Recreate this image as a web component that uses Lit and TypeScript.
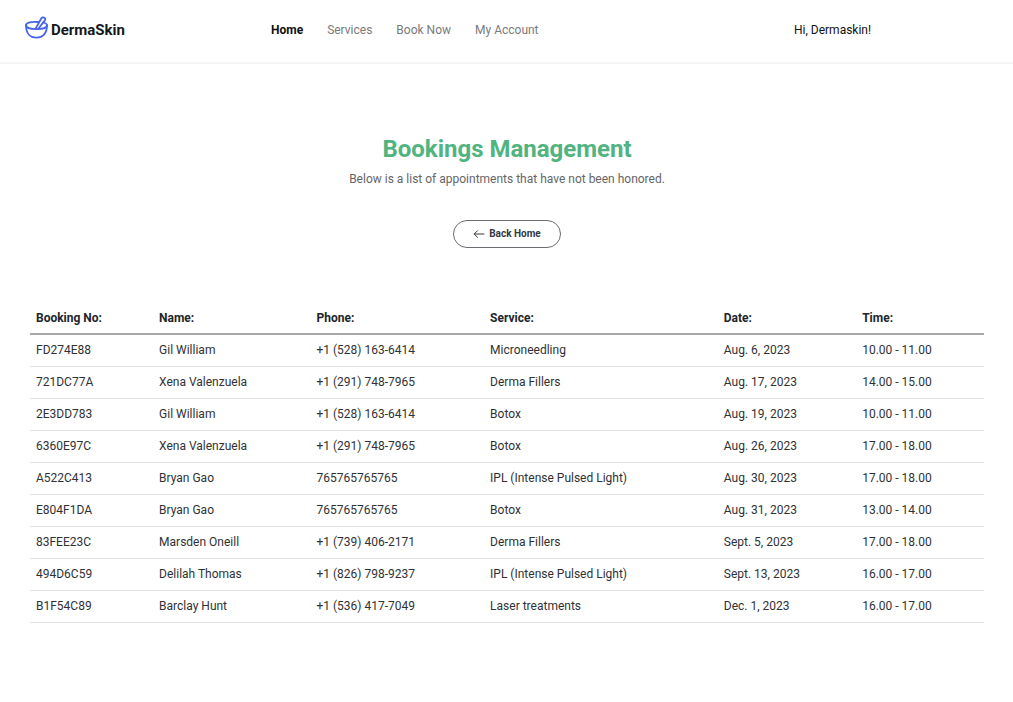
import { LitElement, html, css } from "lit";
import { customElement, property } from "lit/decorators.js";

interface Booking {
  no: string;
  name: string;
  phone: string;
  service: string;
  date: string;
  time: string;
}

const BOOKINGS: Booking[] = [
  { no: "FD274E88", name: "Gil William", phone: "+1 (528) 163-6414", service: "Microneedling", date: "Aug. 6, 2023", time: "10.00 - 11.00" },
  { no: "721DC77A", name: "Xena Valenzuela", phone: "+1 (291) 748-7965", service: "Derma Fillers", date: "Aug. 17, 2023", time: "14.00 - 15.00" },
  { no: "2E3DD783", name: "Gil William", phone: "+1 (528) 163-6414", service: "Botox", date: "Aug. 19, 2023", time: "10.00 - 11.00" },
  { no: "6360E97C", name: "Xena Valenzuela", phone: "+1 (291) 748-7965", service: "Botox", date: "Aug. 26, 2023", time: "17.00 - 18.00" },
  { no: "A522C413", name: "Bryan Gao", phone: "765765765765", service: "IPL (Intense Pulsed Light)", date: "Aug. 30, 2023", time: "17.00 - 18.00" },
  { no: "E804F1DA", name: "Bryan Gao", phone: "765765765765", service: "Botox", date: "Aug. 31, 2023", time: "13.00 - 14.00" },
  { no: "83FEE23C", name: "Marsden Oneill", phone: "+1 (739) 406-2171", service: "Derma Fillers", date: "Sept. 5, 2023", time: "17.00 - 18.00" },
  { no: "494D6C59", name: "Delilah Thomas", phone: "+1 (826) 798-9237", service: "IPL (Intense Pulsed Light)", date: "Sept. 13, 2023", time: "16.00 - 17.00" },
  { no: "B1F54C89", name: "Barclay Hunt", phone: "+1 (536) 417-7049", service: "Laser treatments", date: "Dec. 1, 2023", time: "16.00 - 17.00" },
];

@customElement("site-header")
class SiteHeader extends LitElement {
  static styles = css`
    :host {
      display: block;
      border-bottom: 2px solid #f4f4f4;
    }
    .bar {
      display: grid;
      grid-template-columns: 246fr 523fr 194fr;
      align-items: center;
      height: 62px;
      padding: 0 25px 2px;
      box-sizing: border-box;
    }
    a {
      color: inherit;
      text-decoration: none;
    }
    .brand {
      display: flex;
      align-items: center;
      gap: 3px;
      font-size: 15px;
      line-height: 20px;
      font-weight: 700;
      color: #16181b;
    }
    .logo {
      display: block;
      width: 23px;
      height: 23px;
      margin-bottom: 6px;
    }
    .links {
      display: flex;
      gap: 24px;
      color: #7a7a7a;
    }
    .current {
      font-weight: 700;
      color: #111;
    }
    .greeting {
      color: #111;
    }
  `;

  render() {
    return html`
      <header class="bar">
        <a class="brand" href="#">
          <svg class="logo" viewBox="0 0 23 23" fill="none" stroke="#4664ea" stroke-width="1.8" stroke-linecap="round" stroke-linejoin="round" aria-hidden="true">
            <path d="M13.4 6C6.5 5.4 1 6.8 1 9.2C1 11.6 5.6 13.2 11.5 13.2S22 11.6 22 9.2C22 8 20.6 7.1 18.4 6.5" />
            <path d="M1 9.2C1 17 5 21.6 11.5 21.6S22 17 22 9.2" />
            <path d="M10.6 12.6L16.4 2.3C17.6 .3 21 1.8 20 4.1C19.7 4.8 19.1 5.3 18.6 5.9L13.4 12.8" />
          </svg>
          <span>DermaSkin</span>
        </a>
        <nav class="links" aria-label="Main">
          <a class="current" href="#" aria-current="page">Home</a>
          <a href="#services">Services</a>
          <a href="#book">Book Now</a>
          <a href="#account">My Account</a>
        </nav>
        <span class="greeting">Hi, Dermaskin!</span>
      </header>
    `;
  }
}

@customElement("bookings-table")
class BookingsTable extends LitElement {
  @property({ attribute: false }) bookings: Booking[] = [];

  static styles = css`
    :host {
      display: block;
    }
    table {
      width: 100%;
      table-layout: fixed;
      border-collapse: separate;
      border-spacing: 0;
      color: #2f3235;
    }
    th,
    td {
      box-sizing: border-box;
      padding: 6px;
      line-height: 18px;
      text-align: left;
    }
    td {
      padding-bottom: 7px;
      border-bottom: 1px solid #e2e2e2;
    }
    th {
      font-weight: 700;
      color: #212529;
      border-bottom: 2px solid #a9a9a9;
    }
    .no { width: 12.9%; }
    .name { width: 16.5%; }
    .phone { width: 18.2%; }
    .service { width: 24.5%; }
    .date { width: 14.5%; }
  `;

  render() {
    return html`
      <table>
        <thead>
          <tr>
            <th class="no" scope="col">Booking No:</th>
            <th class="name" scope="col">Name:</th>
            <th class="phone" scope="col">Phone:</th>
            <th class="service" scope="col">Service:</th>
            <th class="date" scope="col">Date:</th>
            <th scope="col">Time:</th>
          </tr>
        </thead>
        <tbody>
          ${this.bookings.map(
            (b) => html`<tr>
              <td>${b.no}</td>
              <td>${b.name}</td>
              <td>${b.phone}</td>
              <td>${b.service}</td>
              <td>${b.date}</td>
              <td>${b.time}</td>
            </tr>`
          )}
        </tbody>
      </table>
    `;
  }
}

@customElement("app-root")
class AppRoot extends LitElement {
  static styles = css`
    :host {
      display: block;
      min-height: 100vh;
      background: #fff;
      font-family: Roboto, "Liberation Sans", sans-serif;
      font-size: 12px;
      line-height: 18px;
    }
    main {
      padding: 68px 29px 72px 30px;
    }
    .intro {
      display: flex;
      flex-direction: column;
      align-items: center;
      text-align: center;
    }
    h1 {
      margin: 0;
      font-size: 24px;
      line-height: 34px;
      font-weight: 700;
      color: #50b480;
    }
    p {
      margin: 4px 0 32px;
      color: #666;
    }
    .back {
      display: flex;
      align-items: center;
      gap: 4px;
      padding: 4px 19px;
      border: 1px solid #6a6e72;
      border-radius: 14px;
      font-size: 10px;
      font-weight: 700;
      color: #343a40;
      text-decoration: none;
    }
    .arrow {
      display: block;
      width: 12px;
      height: 12px;
    }
    bookings-table {
      margin-top: 55px;
    }
  `;

  render() {
    return html`
      <site-header></site-header>
      <main>
        <section class="intro">
          <h1>Bookings Management</h1>
          <p>Below is a list of appointments that have not been honored.</p>
          <a class="back" href="#">
            <svg class="arrow" viewBox="0 0 12 12" fill="none" stroke="currentColor" stroke-linecap="round" stroke-linejoin="round" aria-hidden="true">
              <path d="M11 6H1.2M4.5 2.7L1.2 6L4.5 9.3" />
            </svg>
            <span>Back Home</span>
          </a>
        </section>
        <bookings-table .bookings=${BOOKINGS}></bookings-table>
      </main>
    `;
  }
}
